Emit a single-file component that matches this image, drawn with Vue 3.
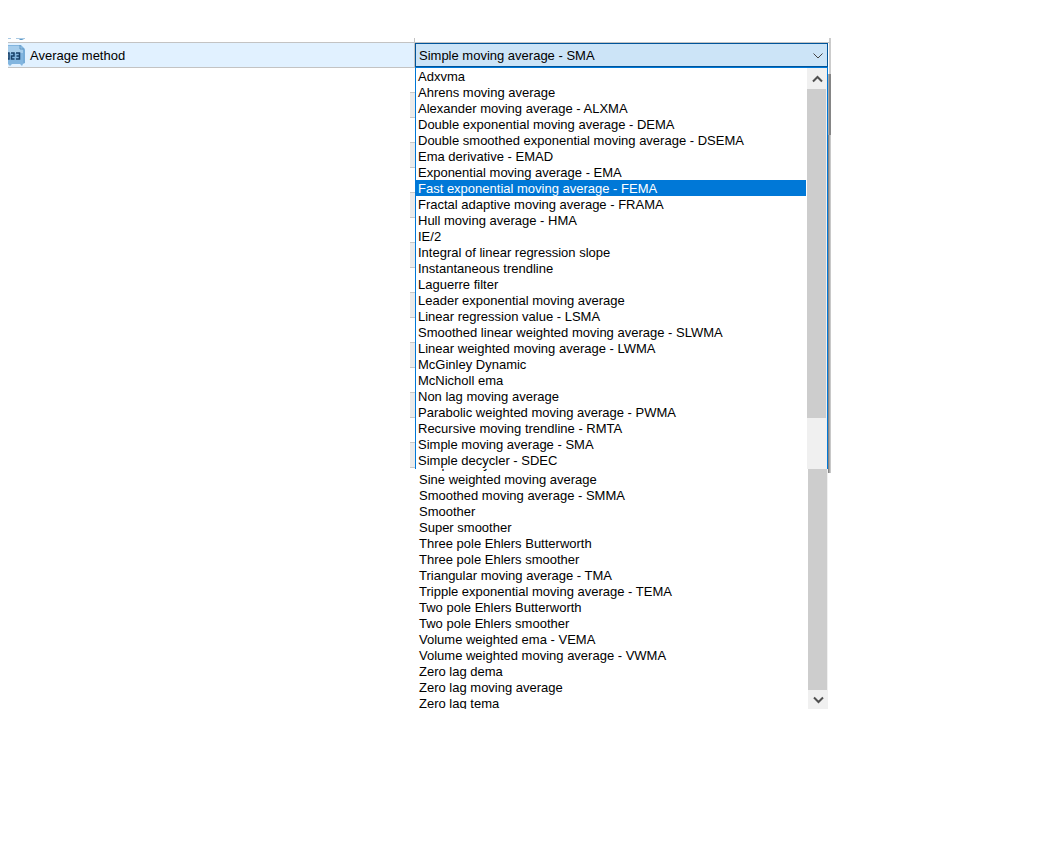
<template>
  <main class="panel">
    <div class="previous-row">
      <div class="previous-name">
        <svg class="icon-tail" viewBox="0 0 17 4" aria-hidden="true">
          <path d="M0 0h3v1H0zM8 0h9v1H8z" fill="#a9c9e3" />
          <path d="M11 1h5l-2 1h-2z" fill="#5d9ac8" />
        </svg>
      </div>
      <div class="previous-value"></div>
    </div>

    <div class="property-row">
      <div class="property-name">
        <svg class="type-icon" viewBox="0 0 17 22" aria-hidden="true">
          <path d="M0 1h13l4 4v14l-2 1-1 2-2-2H4l-2 2-2-2z" fill="#82b5df" />
          <path d="M0 2h12l3 4v3H0z" fill="#a6cdec" />
          <path d="M12 1v4h4" fill="none" stroke="#5d94c0" />
          <path d="M16 6v13" stroke="#6ba2cf" />
          <path d="M0 9h1v6H0M3 9h3v3H3.500v3H6.500M8 9h3.500v6H8M8.500 12h3" fill="none" stroke="#173f68" stroke-width="1.500" />
        </svg>
        <label for="average-method">Average method</label>
      </div>
      <div class="property-value">
        <select id="average-method" v-model="method" class="combo">
          <option v-for="name in allMethods" :key="name" :value="name">{{ name }}</option>
        </select>
        <svg class="combo-arrow" viewBox="0 0 10 6" aria-hidden="true">
          <path d="M.5.5 5 5 9.500.5" fill="none" stroke="#444" />
        </svg>
      </div>
    </div>

    <div class="list-row">
      <div class="row-edges"></div>
      <div class="dropdown">
        <ul class="options" role="listbox" aria-label="Average method">
          <li
            v-for="name in upperMethods"
            :key="name"
            role="option"
            :aria-selected="name === highlighted"
            :class="{ highlighted: name === highlighted }"
            @mouseenter="highlighted = name"
            @click="method = name"
          >
            {{ name }}
          </li>
        </ul>
        <div class="scrollbar">
          <button type="button" class="scroll-button up" aria-label="Scroll up">
            <svg viewBox="0 0 11 8"><path d="M1 6.500l4.500-4.500L10 6.500" /></svg>
          </button>
          <div class="thumb"></div>
        </div>
      </div>
      <div class="shadow"></div>
    </div>

    <div class="list-row">
      <div></div>
      <div class="dropdown continued">
        <ul class="options" role="listbox" aria-label="Average method, continued">
          <li
            v-for="name in lowerMethods"
            :key="name"
            role="option"
            :aria-selected="name === highlighted"
            :class="{ highlighted: name === highlighted }"
            @mouseenter="highlighted = name"
            @click="method = name"
          >
            {{ name }}
          </li>
        </ul>
        <div class="scrollbar">
          <div class="thumb fill"></div>
          <button type="button" class="scroll-button" aria-label="Scroll down">
            <svg viewBox="0 0 11 8"><path d="M1 1.500L5.500 6 10 1.500" /></svg>
          </button>
        </div>
      </div>
    </div>
  </main>
</template>

<script setup>
import { computed, ref } from 'vue';

const upperMethods = [
  'Adxvma',
  'Ahrens moving average',
  'Alexander moving average - ALXMA',
  'Double exponential moving average - DEMA',
  'Double smoothed exponential moving average - DSEMA',
  'Ema derivative - EMAD',
  'Exponential moving average - EMA',
  'Fast exponential moving average - FEMA',
  'Fractal adaptive moving average - FRAMA',
  'Hull moving average - HMA',
  'IE/2',
  'Integral of linear regression slope',
  'Instantaneous trendline',
  'Laguerre filter',
  'Leader exponential moving average',
  'Linear regression value - LSMA',
  'Smoothed linear weighted moving average - SLWMA',
  'Linear weighted moving average - LWMA',
  'McGinley Dynamic',
  'McNicholl ema',
  'Non lag moving average',
  'Parabolic weighted moving average - PWMA',
  'Recursive moving trendline - RMTA',
  'Simple moving average - SMA',
  'Simple decycler - SDEC'
];

// Starts with the entry that is scrolled almost out of view
const lowerMethods = [
  'Simple decycler - SDEC',
  'Sine weighted moving average',
  'Smoothed moving average - SMMA',
  'Smoother',
  'Super smoother',
  'Three pole Ehlers Butterworth',
  'Three pole Ehlers smoother',
  'Triangular moving average - TMA',
  'Tripple exponential moving average - TEMA',
  'Two pole Ehlers Butterworth',
  'Two pole Ehlers smoother',
  'Volume weighted ema - VEMA',
  'Volume weighted moving average - VWMA',
  'Zero lag dema',
  'Zero lag moving average',
  'Zero lag tema'
];

const method = ref('Simple moving average - SMA');
const highlighted = ref('Fast exponential moving average - FEMA');

const allMethods = computed(() => [...upperMethods, ...lowerMethods.slice(1)]);
</script>

<style>
body {
  margin: 0;
  background: #fff;
}
</style>

<style scoped>
.panel {
  padding: 38px 0 0 8px;
  font-family: "Liberation Sans", Arial, sans-serif;
  font-size: 13px;
  line-height: 18px;
  color: #000;
}

.previous-row,
.property-row,
.list-row {
  display: grid;
  grid-template-columns: 407fr 413fr 236fr;
}

.previous-row {
  height: 4px;
}

.previous-name {
  border-right: 1px solid #c3c3c3;
}

.icon-tail {
  display: block;
  width: 17px;
  height: 4px;
}

.previous-value {
  border-right: 2px solid #ccc;
  margin-right: -3px;
}

.property-name {
  display: flex;
  align-items: center;
  gap: 5px;
  height: 24px;
  border: 1px solid #c3c3c3;
  border-left: 0;
  background: #e1f1ff;
}

.property-name label {
  padding-top: 2px;
}

.type-icon {
  width: 17px;
  height: 22px;
}

.property-value {
  position: relative;
  height: 25px;
  margin-right: -3px;
  padding-right: 1px;
  border-top: 1px solid #c3c3c3;
  border-right: 2px solid #ccc;
}

.combo {
  display: block;
  width: 100%;
  height: 24px;
  padding: 2px 24px 0 3px;
  appearance: none;
  border: 1px solid #005499;
  border-radius: 0;
  background: #cce4f7;
  box-shadow: 0 1px #0078d7;
  color: #000;
  font: inherit;
  outline: none;
}

.combo-arrow {
  position: absolute;
  top: 10px;
  right: 6px;
  width: 10px;
  height: 6px;
  pointer-events: none;
}

.row-edges {
  justify-self: end;
  width: 5px;
  background: repeating-linear-gradient(
    #fff 0 24px,
    #c8c8c8 24px 25px,
    #ebebeb 25px 49px,
    #c8c8c8 49px 50px
  );
}

.dropdown {
  display: flex;
  height: 401px;
  box-sizing: border-box;
  border-left: 1px solid #0078d7;
  border-right: 1px solid #0078d7;
  overflow: hidden;
}

.options {
  flex: 1;
  margin: 0;
  padding: 0;
  list-style: none;
}

.options li {
  height: 16px;
  margin-right: 1px;
  padding-left: 2px;
  white-space: nowrap;
  cursor: default;
}

.options li.highlighted {
  background: #0078d7;
  color: #fff;
}

.scrollbar {
  display: flex;
  flex-direction: column;
  width: 20px;
  background: #f0f0f0;
}

.scroll-button {
  display: grid;
  place-items: center;
  width: 20px;
  height: 19px;
  padding: 0;
  border: 0;
  background: #f0f0f0;
}

.scroll-button.up {
  height: 21px;
}

.scroll-button svg {
  width: 11px;
  height: 8px;
}

.scroll-button path {
  fill: none;
  stroke: #505050;
  stroke-width: 2;
}

.thumb {
  width: 19px;
  height: 329px;
  background: #cdcdcd;
}

.thumb.fill {
  flex: 1;
}

.shadow {
  width: 3px;
  margin-bottom: -4px;
  background:
    linear-gradient(90deg, #fff 0 1px, #ccc 1px 3px) 0 0 / 3px 6px no-repeat,
    linear-gradient(90deg, #a8a8a8 0 1px, #858585 1px 3px) 0 6px / 3px 61px no-repeat,
    linear-gradient(90deg, #858585 0 1px, #a8a8a8 1px 2px, #c8c8c8 2px 3px);
}

.continued {
  height: 240px;
  border-right: 0;
  border-left-color: transparent;
}

.continued .options {
  margin-top: -14px;
}

.continued .options li {
  padding-left: 3px;
}
</style>
